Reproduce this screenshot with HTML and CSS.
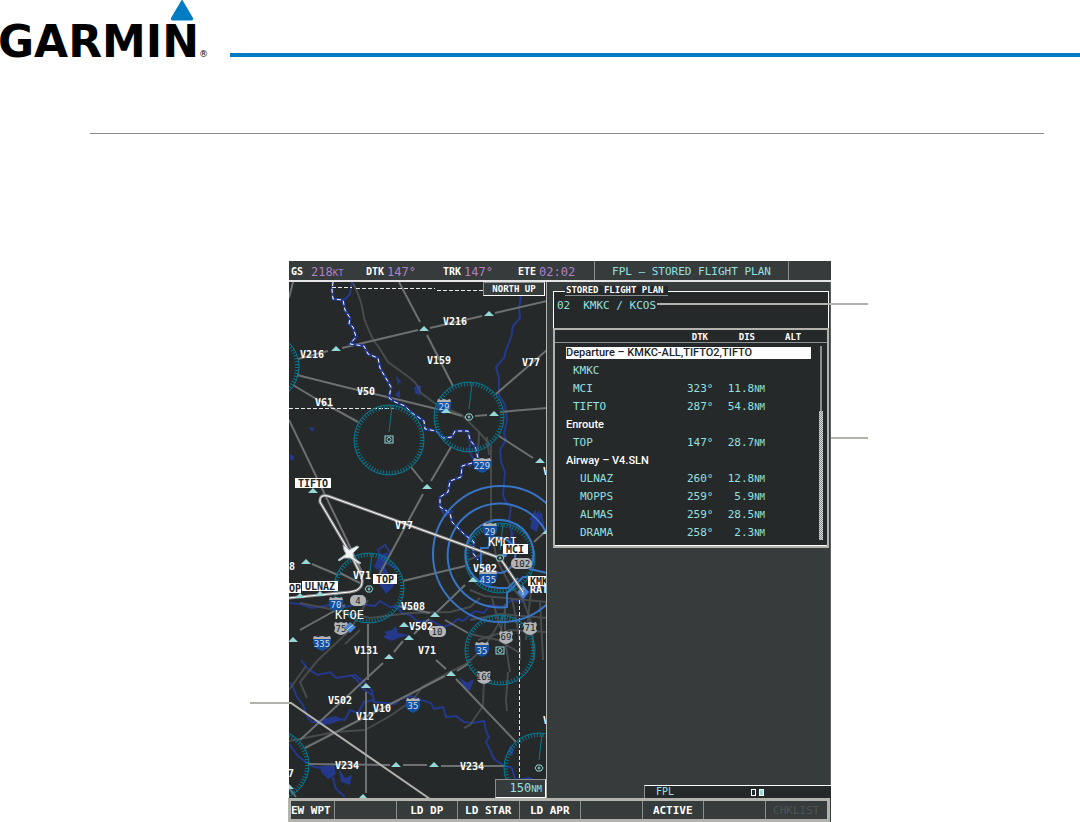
FILE: index.html
```
<!DOCTYPE html>
<html lang="en">
<head>
    <meta charset="UTF-8">
    <meta name="viewport" content="width=device-width, initial-scale=1.0">
    <title>Stored Flight Plan</title>
    <link rel="stylesheet" href="styles.css">
</head>
<body>
    <header class="page-header">
        <div class="logo">
            <span class="logo-name">GARMIN</span><span class="logo-mark">®</span>
            <svg class="logo-triangle" viewBox="0 0 22 21"><path d="M10 1Q11-1 12 1L22 18Q22.500 20.500 20 20.500H2Q-.5 20.500 0 18Z"/></svg>
        </div>
        <div class="header-rule"></div>
    </header>
    <main class="content">
        <hr class="section-rule">
        <figure class="figure">
            <div class="device">
                <div class="topbar">
                    <div class="nav-data">
                        <div class="nav-item nav-gs"><span>GS</span><b>218<small>KT</small></b></div>
                        <div class="nav-item"><span>DTK</span><b>147°</b></div>
                        <div class="nav-item"><span>TRK</span><b>147°</b></div>
                        <div class="nav-item"><span>ETE</span><b>02:02</b></div>
                    </div>
                    <h1 class="page-name">FPL – STORED FLIGHT PLAN</h1>
                    <div class="topbar-end"></div>
                </div>
                <div class="screen">
                    <div class="map">
                        <svg class="map-svg" viewBox="289 282 258 516">
                            <defs>
                                <g id="rose">
                                    <circle r="35" class="rose-ring"/>
                                    <circle r="33" class="rose-ticks"/>
                                    <path d="M0-8L3-34" class="rose-ring"/>
                                </g>
                                <path id="fix" d="M0-3L5 2H-5Z"/>
                                <g id="vor"><path d="M-4 0L-2-3H2L4 0L2 3H-2Z" class="vor"/><circle r="1" class="vor"/></g>
                                <g id="vordme"><rect x="-4" y="-4" width="8" height="7" class="vor"/><circle r="2" cy="-.5" class="vor"/></g>
                                <g id="interstate">
                                    <path d="M-7-4Q-9 5 0 8Q9 5 7-4Z" fill="#1450a0"/>
                                    <path d="M-6-7L-3-6L0-7L3-6L6-7L7-4H-7Z" fill="#b0b4b6"/>
                                </g>
                                <g id="interstate-wide">
                                    <path d="M-9-4Q-10 5 0 8Q10 5 9-4Z" fill="#1450a0"/>
                                    <path d="M-8-7L-4-6L0-7L4-6L8-7L9-4H-9Z" fill="#b0b4b6"/>
                                </g>
                                <path id="us" d="M-6-6L-3-5L0-6L3-5L6-6L7-3Q5 0 7 3Q5 6 0 7Q-5 6-7 3Q-5 0-7-3Z" fill="#b0b4b6"/>
                            </defs>

                            <!-- water -->
                            <g class="water">
                                <path d="M521 296L519 309L520 318L513 326L511 338L506 350L504 358L496 367L499 378V395L505 405L507 420L504 434L506 440L500 450L501 462L505 472L503 495L506 502L511 507L509 520L512 535L508 545"/>
                                <path d="M289 603L300 604L312 608L330 605L345 607L358 604L375 606L380 601L390 607L396 606L402 613L410 615L418 622L430 620L443 627L452 624L458 619L463 621L475 611L484 613L490 605L502 607L512 600L522 602L530 590L547 585"/>
                                <path d="M301 660L308 669L318 675L330 672L336 678L355 675L365 683L372 691L374 702L395 704L400 699L411 696L421 700L431 703L434 709L443 707L446 717L456 716L464 722L472 723L484 721L486 731L489 737L486 742L490 750L494 759L503 765L512 768L515 780L530 778L542 785"/>
                                <path d="M289 682L293 687L297 697L303 705L307 716L312 722L325 722L332 718L345 720L350 710L358 713L364 702L374 700"/>
                                <path d="M289 744L298 756L307 763L314 767L322 768L333 778L336 789L345 797"/>
                                <path d="M372 695L362 688L358 681L351 675"/>
                                <path d="M440 507L445 516L453 511M530 520L535 512L537 528L541 513L544 530M513 532L510 540L517 545L515 555"/>
                                <path d="M471 440L469 450L474 461L469 467M352 282L350 294L344 300"/>
                                <path d="M380 571L375 566L382 559L378 550L385 545L390 552L386 563L398 569"/>
                            </g>
                            <g class="lake">
                                <path d="M378 556L388 552L385 567L389 575L394 586L386 594L379 584L383 571L375 566Z"/>
                                <path d="M384 632L392 630L396 626L398 633L410 635L398 638L392 641L383 637L387 634Z"/>
                                <path d="M320 766L334 765L336 774L328 779L321 772Z"/>
                                <path d="M339 769L345 778L352 775L350 785L341 782Z"/>
                                <path d="M459 677L467 683L474 679L470 691L464 688Z"/>
                                <path d="M318 720L336 716L342 720L330 724L317 725Z"/>
                                <path d="M414 387L421 385L420 396L415 393ZM396 376L401 381L398 385ZM396 393L400 390V398L396 396Z"/>
                                <path d="M309 427L315 428L312 432ZM290 454L294 456L293 461L290 459ZM533 516L540 510L537 532L530 528Z"/>
                                <path d="M510 745L514 750L512 756L508 752Z"/>
                            </g>

                            <!-- roads -->
                            <g class="road">
                                <path d="M353 283Q362 300 364 318Q372 340 378 346L388 362L410 378Q418 384 421 393L436 404L462 415L479 432L491 446V530"/>
                                <path d="M479 432L478 455M487 437L489 455"/>
                                <path d="M480 598L470 607L450 612L410 613L370 618L345 612L300 603"/>
                                <path d="M491 530L497 560L510 585L523 600L532 625L534 660"/>
                                <path d="M470 590L485 596L505 598L547 602M492 598L498 620L505 640L510 672M512 598L520 640V660M470 620L500 614L547 618M505 604V630M532 580L526 640M540 600L543 660M478 640L510 630L547 632"/>
                                <path d="M289 741L335 732L365 730L390 716L413 700L422 687L450 672L466 664L482 650L495 630L505 612"/>
                                <path d="M307 698L300 682L318 660L350 630L368 600M289 690L306 666M484 678L483 706L470 725L464 728M508 672L506 700L507 711M345 644L360 630M468 560L489 552M470 634L498 640L520 653"/>
                            </g>

                            <!-- airways -->
                            <g class="airway">
                                <path d="M298 359L328 351M342 348L418 330M430 328L482 316M495 313L547 301"/>
                                <path d="M399 282L420 322M427 335L453 386M496 394L547 350M293 282L289 298"/>
                                <path d="M297 375L345 387L400 400L445 411L462 416M293 385L318 400L358 422"/>
                                <path d="M475 416L487 415M500 412L547 408M499 436L533 458"/>
                                <path d="M289 420L342 530L362 572M411 467L423 482M431 481L451 447M423 494L405 527L378 577"/>
                                <path d="M312 564L338 575M403 581L465 566M465 585L437 612M429 619L414 634"/>
                                <path d="M300 630L345 605M403 641L394 652M445 620L468 633M368 624V680M366 692V793"/>
                                <path d="M383 663L300 740M305 748L445 676M457 671L468 664M456 679L516 742M436 660L446 669"/>
                                <path d="M308 764L390 765M403 765H427M441 766H505M398 606L430 613M340 573L360 583M289 788L296 797"/>
                                <path d="M534 542L547 530"/>
                            </g>

                            <!-- state lines -->
                            <path class="state-river" d="M333 282L332 290L333 299L343 300L345 310L350 318L349 324L353 327L356 337L350 344L364 346L368 354L378 358L380 368L387 380L391 387L389 398L395 402L405 406L412 413L424 421L425 429L436 431L443 438L452 437L455 431L468 431L470 440L475 446L478 458"/>
                            <path class="state-line" d="M333 282L332 290L333 299L343 300L345 310L350 318L349 324L353 327L356 337L350 344L364 346L368 354L378 358L380 368L387 380L391 387L389 398L395 402L405 406L412 413L424 421L425 429L436 431L443 438L452 437L455 431L468 431L470 440L475 446L478 458"/>
                            <path class="state-river" d="M472 463L462 466L461 477L450 481L448 492L440 497V507L450 513L452 522L465 535L474 542L473 553L478 560"/>
                            <path class="state-line" d="M472 463L462 466L461 477L450 481L448 492L440 497V507L450 513L452 522L465 535L474 542L473 553L478 560"/>
                            <path class="border-line" d="M332 287.500H352M356 288.500H435M437 290.500H483M289 408.500H394"/>
                            <path class="border-line" d="M519.500 600V798"/>

                            <!-- compass roses -->
                            <use href="#rose" x="264" y="367"/>
                            <use href="#rose" x="389" y="440"/>
                            <use href="#rose" x="469" y="417"/>
                            <use href="#rose" x="369" y="588"/>
                            <use href="#rose" x="500" y="558"/>
                            <use href="#rose" x="500" y="650"/>
                            <use href="#rose" x="539" y="768"/>
                            <use href="#rose" x="274" y="765"/>

                            <!-- airspace -->
                            <g class="airspace">
                                <circle cx="501" cy="554" r="68"/>
                                <path d="M547 575V577M507 593V607A52 52 0 1 1 547 577H523L507 593"/>
                                <path d="M500 588A34 34 0 1 1 530 569L547 573M500 588H508L518 578"/>
                                <path d="M488 571L481 565V548H488L492 538A18 18 0 1 1 500 573L488 571"/>
                            </g>

                            <!-- road shields -->
                            <use href="#interstate" x="444" y="406"/><text class="shield" x="444" y="410">29</text>
                            <use href="#interstate-wide" x="482" y="465"/><text class="shield" x="482" y="469">229</text>
                            <use href="#interstate" x="490" y="530"/><text class="shield" x="490" y="535">29</text>
                            <use href="#interstate-wide" x="488" y="578"/><text class="shield" x="488" y="583">435</text>
                            <use href="#interstate" x="336" y="604"/><text class="shield" x="336" y="608">70</text>
                            <use href="#interstate-wide" x="322" y="643"/><text class="shield" x="322" y="647">335</text>
                            <use href="#interstate" x="482" y="649"/><text class="shield" x="482" y="654">35</text>
                            <use href="#interstate" x="413" y="705"/><text class="shield" x="413" y="709">35</text>
                            <use href="#us" x="341" y="628"/><text class="shield dark" x="341" y="632">75</text>
                            <use href="#us" x="506" y="637"/><text class="shield dark" x="506" y="640">69</text>
                            <use href="#us" x="530" y="628"/><text class="shield dark" x="530" y="631">71</text>
                            <use href="#us" x="484" y="677"/><text class="shield dark" x="484" y="680">169</text>
                            <rect class="oval" x="350" y="595" width="16" height="11" rx="5"/><text class="shield dark" x="358" y="604">4</text>
                            <rect class="oval" x="429" y="626" width="17" height="11" rx="5"/><text class="shield dark" x="437" y="635">10</text>
                            <rect class="oval" x="511" y="558" width="21" height="11" rx="5"/><text class="shield dark" x="522" y="567">102</text>

                            <!-- airports -->
                            <g class="airport">
                                <path d="M350 622L356 627L350 633L344 628Z"/>
                                <path d="M523 585L529 592L523 599L517 592Z"/>
                                <path d="M505 549L509 551L506 557L501 557Z"/>
                            </g>
                            <path d="M347 630L353 625M523 588V595" stroke="#d0dcec"/>

                            <!-- stations and fixes -->
                            <g class="fix">
                                <use href="#fix" x="336" y="349"/><use href="#fix" x="424" y="329"/><use href="#fix" x="489" y="314"/>
                                <use href="#fix" x="494" y="414"/><use href="#fix" x="540" y="461"/><use href="#fix" x="427" y="487"/>
                                <use href="#fix" x="446" y="411"/><use href="#fix" x="313" y="491"/><use href="#fix" x="306" y="562"/>
                                <use href="#fix" x="473" y="580"/><use href="#fix" x="404" y="625"/><use href="#fix" x="409" y="638"/>
                                <use href="#fix" x="435" y="615"/><use href="#fix" x="389" y="657"/><use href="#fix" x="366" y="686"/>
                                <use href="#fix" x="293" y="640"/><use href="#fix" x="451" y="674"/><use href="#fix" x="396" y="765"/>
                                <use href="#fix" x="434" y="765"/><use href="#fix" x="363" y="797"/><use href="#fix" x="289" y="787"/>
                                <use href="#fix" x="547" y="532"/>
                            </g>
                            <use href="#vordme" x="389" y="440"/>
                            <use href="#vor" x="469" y="417"/>
                            <use href="#vor" x="369" y="589"/>
                            <use href="#vordme" x="500" y="651"/>
                            <use href="#vor" x="539" y="768"/>

                            <!-- active route -->
                            <path class="route-edge" d="M523 592L500 558L328 496Q319 494 320 502L350 553L361 575Q366 590 350 592L289 598"/>
                            <path class="route" d="M523 592L500 558L328 496Q319 494 320 502L350 553L361 575Q366 590 350 592L289 598"/>
                            <use href="#vor" x="500" y="558"/>
                            <g class="fix"><use href="#fix" x="300" y="596"/><use href="#fix" x="320" y="594"/></g>
                            <path class="plane" d="M343 545L346 547L349 550L357 546L359 547L353 553L354 558L361 563L359 564L350 558L344 558L339 561L338 560L346 554L344 550Z"/>

                            <!-- labels -->
                            <g class="label">
                                <text x="443" y="325">V216</text><text x="300" y="358">V216</text>
                                <text x="427" y="364">V159</text><text x="522" y="366">V77</text>
                                <text x="357" y="395">V50</text><text x="315" y="406">V61</text>
                                <text x="395" y="529">V77</text><text x="473" y="572">V502</text>
                                <text x="353" y="579">V71</text><text x="401" y="610">V508</text>
                                <text x="409" y="630">V502</text><text x="418" y="654">V71</text>
                                <text x="354" y="654">V131</text><text x="328" y="704">V502</text>
                                <text x="373" y="712">V10</text><text x="356" y="720">V12</text>
                                <text x="335" y="769">V234</text><text x="460" y="770">V234</text>
                                <text x="289" y="570">8</text><text x="288" y="777">7</text>
                                <text x="543" y="475">V</text><text x="543" y="724">V</text>
                                <text x="530" y="593">RAT</text>
                            </g>
                            <g class="airport-name"><text x="488" y="546">KMCI</text><text x="335" y="619">KFOE</text></g>
                            <g class="tag">
                                <rect x="295" y="478" width="36" height="10"/><rect x="503" y="544" width="25" height="10"/>
                                <rect x="373" y="574" width="24" height="10"/><rect x="302" y="581" width="36" height="10"/>
                                <rect x="289" y="583" width="12" height="10"/><rect x="528" y="576" width="19" height="10"/>
                            </g>
                            <g class="label tag-text">
                                <text x="298" y="487">TIFTO</text><text x="506" y="553">MCI</text><text x="376" y="583">TOP</text>
                                <text x="305" y="590">ULNAZ</text><text x="283" y="592">MOP</text><text x="530" y="585">KMKC</text>
                            </g>
                        </svg>
                        <div class="orientation">NORTH UP</div>
                        <div class="range">150<small>NM</small></div>
                    </div>
                    <div class="side">
                        <section class="plan-name">
                            <h2>STORED FLIGHT PLAN</h2>
                            <p><span>02</span><span>KMKC / KCOS</span></p>
                        </section>
                        <section class="plan-list">
                            <table>
                                <thead>
                                    <tr><th class="col-name"></th><th class="col-dtk">DTK</th><th class="col-dis">DIS</th><th class="col-alt">ALT</th></tr>
                                </thead>
                                <tbody>
                                    <tr class="group selected"><td colspan="4"><span>Departure – KMKC-ALL,TIFTO2,TIFTO</span></td></tr>
                                    <tr><td>KMKC</td><td></td><td></td><td></td></tr>
                                    <tr><td>MCI</td><td>323°</td><td>11.8<small>NM</small></td><td></td></tr>
                                    <tr><td>TIFTO</td><td>287°</td><td>54.8<small>NM</small></td><td></td></tr>
                                    <tr class="group"><td colspan="4"><span>Enroute</span></td></tr>
                                    <tr><td>TOP</td><td>147°</td><td>28.7<small>NM</small></td><td></td></tr>
                                    <tr class="group"><td colspan="4"><span>Airway – V4.SLN</span></td></tr>
                                    <tr class="airway-leg"><td>ULNAZ</td><td>260°</td><td>12.8<small>NM</small></td><td></td></tr>
                                    <tr class="airway-leg"><td>MOPPS</td><td>259°</td><td>5.9<small>NM</small></td><td></td></tr>
                                    <tr class="airway-leg"><td>ALMAS</td><td>259°</td><td>28.5<small>NM</small></td><td></td></tr>
                                    <tr class="airway-leg"><td>DRAMA</td><td>258°</td><td>2.3<small>NM</small></td><td></td></tr>
                                </tbody>
                            </table>
                            <div class="scrollbar"><div class="track"></div><div class="thumb"></div></div>
                        </section>
                        <div class="page-group">
                            <span>FPL</span>
                            <span class="page-marks"><i></i><i class="current"></i></span>
                        </div>
                    </div>
                </div>
                <div class="softkeys">
                    <button class="first">EW WPT</button>
                    <button></button>
                    <button>LD DP</button>
                    <button>LD STAR</button>
                    <button>LD APR</button>
                    <button></button>
                    <button>ACTIVE</button>
                    <button></button>
                    <button disabled>CHKLIST</button>
                </div>
                <!-- callout lines -->
                <svg class="callouts" viewBox="250 261 618 561">
                    <path d="M657 304H868M831 438H868M250 703H291L430 799"/>
                </svg>
            </div>
        </figure>
    </main>
</body>
</html>
```
FILE: styles.css
```
/* styles.css */
body {
    margin: 0;
    background-color: #ffffff;
    font-family: 'DejaVu Sans Mono', 'Liberation Mono', monospace;
}

.page-header {
    display: flex;
    align-items: flex-end;
    gap: 22px;
    height: 58px;
}

.logo {
    position: relative;
    display: flex;
    align-items: flex-end;
    width: 208px;
    height: 58px;
    color: #000;
    font-family: 'DejaVu Sans', sans-serif;
}

.logo-name {
    font-size: 44px;
    font-weight: bold;
    line-height: 32px;
    margin-left: -2px;
}

.logo-mark {
    font-size: 9px;
    line-height: 8px;
}

.logo-triangle {
    position: absolute;
    top: 0;
    left: 171px;
    width: 22px;
    height: 21px;
    fill: #007cc3;
}

.header-rule {
    flex: 1;
    height: 4px;
    margin-bottom: 1px;
    background-color: #007cc3;
}

.content {
    margin: 75px 36px 0 90px;
}

.section-rule {
    height: 1px;
    margin: 0 0 127px;
    border: none;
    background-color: #8a8a8a;
}

.figure {
    display: flex;
    justify-content: center;
    margin: 0 14px 0 0;
}

/* Display */
.device {
    position: relative;
    flex: none;
    width: 542px;
    background-color: #363b3c;
    color: #fff;
}

.topbar {
    display: flex;
    height: 19px;
    border-bottom: 2px solid #e4e4e4;
    line-height: 22px;
}

.nav-data {
    display: grid;
    grid-template-columns: 75px 77px 75px 76px;
    width: 303px;
    padding-left: 2px;
}

.nav-item {
    display: flex;
    gap: 3px;
}

.nav-gs {
    gap: 8px;
}

.nav-item span {
    font-size: 10px;
    font-weight: bold;
}

.nav-item b {
    font-size: 12px;
    font-weight: normal;
    color: #b080c8;
}

small {
    font-size: 9px;
    line-height: 9px;
}

.page-name {
    flex: 1;
    margin: 0;
    border-left: 1px solid #8a8e8e;
    border-right: 1px solid #8a8e8e;
    font-size: 11px;
    font-weight: normal;
    line-height: 22px;
    text-align: center;
    color: #96e0e0;
}

.topbar-end {
    width: 42px;
}

.screen {
    display: flex;
}

/* Map */
.map {
    position: relative;
    width: 258px;
    background-color: #25292a;
    overflow: hidden;
}

.map-svg {
    display: block;
    width: 258px;
    height: 516px;
    fill: none;
}

.map::after {
    content: "";
    position: absolute;
    top: 0;
    right: 0;
    bottom: 0;
    width: 1px;
    background-color: #b4b6b4;
}

.rose-ring {
    stroke: #087890;
}

.rose-ticks {
    stroke: #087890;
    stroke-width: 4;
    stroke-dasharray: 1 2;
}

.water {
    stroke: #24398c;
    stroke-width: 2;
}

.lake {
    fill: #24398c;
}

.road {
    stroke: #505456;
    stroke-width: 2;
    stroke-opacity: 0.8;
}

.airway {
    stroke: #6c7070;
    stroke-width: 2;
}

.state-river {
    stroke: #24398c;
    stroke-width: 3;
}

.state-line {
    stroke: #fff;
    stroke-dasharray: 4 3;
}

.border-line {
    stroke: #e8e8e8;
    stroke-dasharray: 4 2;
}

.airspace {
    stroke: #3874c4;
    stroke-width: 2;
}

.airport {
    fill: #4884d0;
}

.fix {
    fill: #96d8d8;
}

.vor {
    stroke: #96d8d8;
    fill: #25292a;
}

.oval {
    fill: #b0b4b6;
}

.route-edge {
    stroke: #888;
    stroke-width: 3;
}

.route {
    stroke: #fff;
    stroke-width: 1;
}

.plane {
    fill: #f0f4f4;
    stroke: #a0b0b8;
}

.shield {
    fill: #d0dcec;
    font-size: 9px;
    text-anchor: middle;
}

.shield.dark {
    fill: #202426;
}

.label {
    fill: #fff;
    font-size: 10px;
    font-weight: bold;
}

.airport-name {
    fill: #fff;
    font-size: 12px;
}

.tag {
    fill: #fff;
}

.tag-text {
    fill: #202426;
}

.orientation {
    position: absolute;
    top: 0;
    right: 2px;
    width: 60px;
    border: 1px solid #8a8e8e;
    border-right-color: #fff;
    border-bottom-color: #fff;
    background-color: #363b3c;
    font-size: 9px;
    font-weight: bold;
    line-height: 12px;
    text-align: center;
}

.range {
    position: absolute;
    right: 1px;
    bottom: 0;
    width: 46px;
    padding-right: 3px;
    border: 1px solid #8a8e8e;
    border-right-color: #fff;
    border-bottom-color: #fff;
    background-color: #363b3c;
    font-size: 12px;
    line-height: 17px;
    text-align: right;
    color: #96e0e0;
}

/* Side panel */
.side {
    display: flex;
    flex-direction: column;
    flex: 1;
    padding: 9px 1px 0 6px;
    border-right: 1px solid #5c6060;
}

.plan-name {
    position: relative;
    height: 36px;
    border: 1px solid #fff;
    border-bottom: none;
    background-color: #25292a;
}

.plan-name h2 {
    position: absolute;
    top: -6px;
    left: 11px;
    margin: 0;
    padding: 0 4px 0 1px;
    border-bottom: 1px solid #8a8e8e;
    background-color: #25292a;
    font-size: 9px;
    line-height: 9px;
}

.plan-name p {
    display: flex;
    gap: 13px;
    margin: 6px 0 0 3px;
    font-size: 11px;
    line-height: 16px;
    color: #96e0e0;
}

.plan-list {
    position: relative;
    display: flex;
    gap: 7px;
    padding-bottom: 4px;
    border: 2px solid #b4b2ad;
    background-color: #25292a;
}

/* line under the column names, across the scrollbar too */
.plan-list::before {
    content: "";
    position: absolute;
    top: 12px;
    left: 0;
    right: 0;
    height: 1px;
    background-color: #8a8e8e;
}

.plan-list::after {
    content: "";
    position: absolute;
    left: 0;
    right: 0;
    bottom: 0;
    height: 1px;
    background-color: #fff;
}

table {
    width: 256px;
    border-collapse: collapse;
    table-layout: fixed;
}

th {
    box-sizing: border-box;
    height: 13px;
    padding: 0;
    font-size: 9px;
    line-height: 12px;
    text-align: right;
}

tbody::before {
    content: "";
    display: block;
    height: 1px;
}

.col-name {
    width: 132px;
}

.col-dtk {
    width: 26px;
    padding-right: 5px;
}

.col-dis {
    width: 52px;
    padding-right: 10px;
}

.col-alt {
    padding-left: 20px;
    text-align: left;
}

td {
    height: 18px;
    padding: 0;
    font-size: 11px;
    line-height: 18px;
    text-align: right;
    vertical-align: baseline;
    white-space: nowrap;
    color: #96e0e0;
}

td:first-child {
    padding-left: 18px;
    text-align: left;
}

.airway-leg td:first-child {
    padding-left: 25px;
}

.group td:first-child {
    padding-left: 11px;
    font-family: Roboto, sans-serif;
    font-weight: 500;
    vertical-align: middle;
    color: #fff;
}

.group span {
    display: block;
    line-height: 12px;
}

.selected span {
    background-color: #fff;
    color: #202426;
}

.scrollbar {
    display: flex;
    flex-direction: column;
    align-items: center;
    width: 6px;
    padding-top: 16px;
}

.track {
    width: 2px;
    height: 65px;
    background-color: #8a8e8e;
}

.thumb {
    width: 4px;
    height: 129px;
    background: repeating-conic-gradient(#d8dada 0 25%, #8a8e8e 0 50%) 0 0 / 2px 2px;
}

.page-group {
    display: flex;
    justify-content: space-between;
    margin: auto -2px 0 91px;
    padding: 0 67px 0 11px;
    border-top: 1px solid #fff;
    border-left: 1px solid #8a8e8e;
    background-color: #25292a;
    font-size: 10px;
    line-height: 12px;
    color: #96e0e0;
}

.page-marks {
    display: flex;
    align-items: center;
    gap: 3px;
}

.page-marks i {
    width: 3px;
    height: 5px;
    border: 1px solid #fff;
}

.page-marks .current {
    background-color: #96d8d8;
}

/* Softkeys */
.softkeys {
    display: grid;
    grid-template-columns: 44px repeat(8, 1fr);
    height: 18px;
    margin: 0 1px 0 -1px;
    border: 3px solid #b4b2ad;
}

.softkeys button {
    margin: 0;
    padding: 0;
    border: none;
    border-right: 1px solid #8a8e8e;
    background-color: #363b3c;
    color: #fff;
    font-family: inherit;
    font-size: 11px;
    font-weight: bold;
    line-height: 17px;
    white-space: nowrap;
    overflow: hidden;
}

.softkeys .first {
    text-align: left;
}

.softkeys button:last-child {
    border-right: none;
}

.softkeys button:disabled {
    color: #4e5454;
    font-weight: normal;
}

.callouts {
    position: absolute;
    top: 0;
    left: -39px;
    width: 618px;
    height: 561px;
    fill: none;
    stroke: #b4b2ad;
    stroke-width: 2;
    pointer-events: none;
}
```
